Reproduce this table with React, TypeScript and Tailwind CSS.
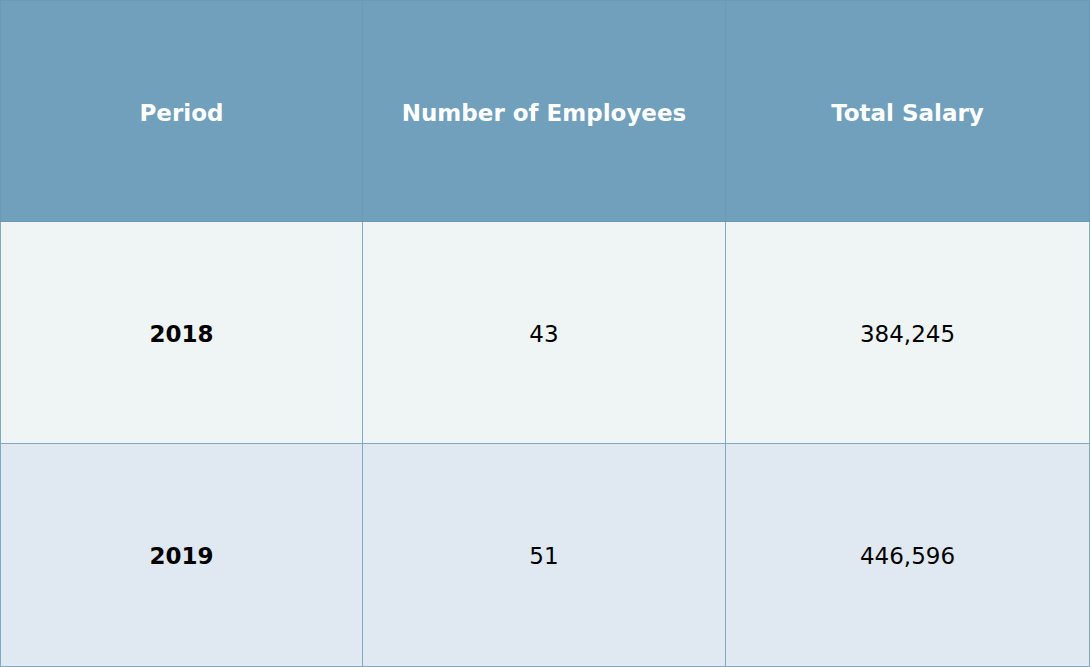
const rows = [
  { period: '2018', employees: '43', salary: '384,245', bg: 'bg-[#eff5f5]', h: 'h-[222px]', pad: 'pt-[4px]' },
  { period: '2019', employees: '51', salary: '446,596', bg: 'bg-[#e0e9f1]', h: 'h-[223px]', pad: 'pt-[2px]' },
]

export default function App() {
  return (
    <div className="w-[1090px] h-[667px] bg-white font-['DejaVu_Sans',sans-serif]">
      <table className="w-full border-collapse table-fixed text-[23px]">
        <colgroup>
          <col className="w-[362px]" />
          <col className="w-[363px]" />
          <col />
        </colgroup>
        <thead>
          <tr className="bg-[#70a0bb] text-white h-[221px]">
            <th className="border border-[#6a9ab5] font-bold pt-1">Period</th>
            <th className="border border-[#6a9ab5] font-bold pt-1">Number of Employees</th>
            <th className="border border-[#6a9ab5] font-bold pt-1">Total Salary</th>
          </tr>
        </thead>
        <tbody>
          {rows.map((r) => (
            <tr key={r.period} className={`${r.bg} ${r.h} text-black`}>
              <td className={`border border-[#80aac0] text-center font-bold ${r.pad}`}>{r.period}</td>
              <td className={`border border-[#80aac0] text-center ${r.pad}`}>{r.employees}</td>
              <td className={`border border-[#80aac0] text-center ${r.pad}`}>{r.salary}</td>
            </tr>
          ))}
        </tbody>
      </table>
    </div>
  )
}
